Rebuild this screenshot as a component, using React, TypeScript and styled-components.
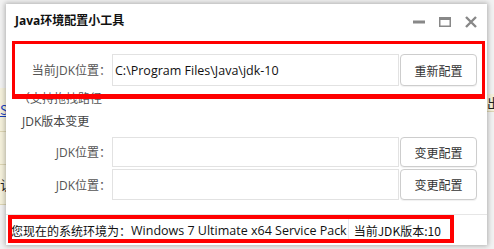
import React from "react";
import styled, { createGlobalStyle } from "styled-components";

const Global = createGlobalStyle`
  html, body { margin: 0; padding: 0; }
  body {
    width: 494px;
    height: 249px;
    overflow: hidden;
    background: #f2f2f2;
    font-family: "Open Sans", "Noto Sans CJK SC", sans-serif;
  }
`;

const Page = styled.div`
  position: relative;
  width: 494px;
  height: 249px;
  display: flex;
  justify-content: space-between;
  background: #f2f2f2;
`;

const Strip = styled.div<{ $w: number }>`
  width: ${(p) => p.$w}px;
  display: flex;
  flex-direction: column;
  overflow: hidden;
`;

const Cell = styled.div<{ $h: number; $tone?: "yellow" | "plain" }>`
  height: ${(p) => p.$h}px;
  flex: none;
  box-sizing: border-box;
  background: ${(p) => (p.$tone === "yellow" ? "#f5f1dc" : "#f2f2f2")};
  border-bottom: 1px solid ${(p) => (p.$tone === "yellow" ? "#ddd6b4" : "transparent")};
  font-family: "Noto Sans CJK SC", sans-serif;
  font-size: 13px;
  line-height: ${(p) => p.$h}px;
  white-space: nowrap;
  color: #222;
`;

const LinkText = styled.span`
  color: #1a3fc0;
  text-decoration: underline;
`;

const Window = styled.div`
  position: absolute;
  left: 6px;
  top: 4px;
  width: 481px;
  height: 241px;
  background: #ffffff;
  box-shadow: 0 0 5px 1px rgba(0, 0, 0, 0.28);
  display: flex;
  flex-direction: column;
`;

const TitleBar = styled.div`
  height: 36px;
  display: flex;
  align-items: center;
  padding: 0 10px 0 9px;
  flex: none;
`;

const Title = styled.div`
  flex: 1;
  font-weight: bold;
  font-size: 12px;
  color: #111;
  padding-bottom: 4px;
  font-family: "Open Sans", "Noto Sans CJK SC", sans-serif;
`;

const Controls = styled.div`
  display: flex;
  gap: 14px;
  align-items: center;
`;

const CtlIcon = styled.svg`
  width: 12px;
  height: 12px;
  display: block;
`;

const Body = styled.div`
  flex: 1;
  display: flex;
  flex-direction: column;
  padding: 14px 11px 0 11px;
`;

const FieldRow = styled.div<{ $h: number }>`
  display: grid;
  grid-template-columns: 94px 287px 77px;
  column-gap: 1px;
  height: ${(p) => p.$h}px;
  margin-bottom: 2px;
`;

const Label = styled.div`
  display: flex;
  align-items: center;
  justify-content: flex-end;
  font-size: 12px;
  color: #555;
  white-space: nowrap;
`;

const Input = styled.div`
  box-sizing: border-box;
  border: 1px solid #e2e2e2;
  display: flex;
  align-items: center;
  padding-left: 2px;
  font-size: 12.5px;
  color: #111;
  white-space: nowrap;
`;

const Button = styled.button`
  box-sizing: border-box;
  border: 1px solid #cdcdcd;
  border-radius: 4px;
  background: #fff;
  font-family: "Noto Sans CJK SC", sans-serif;
  font-size: 12px;
  color: #333;
  padding: 0;
  box-shadow: 0 1px 1px rgba(0, 0, 0, 0.06);
`;

const Hint = styled.div`
  height: 18px;
  line-height: 18px;
  margin-top: 2px;
  font-size: 12px;
  color: #555;
  margin-left: 1px;
`;

const Heading = styled.div`
  height: 18px;
  line-height: 18px;
  margin: 5px 0 6px 5px;
  font-size: 12px;
  color: #444;
`;

const Footer = styled.div`
  height: 30px;
  flex: none;
  border-top: 1px solid #e6e6e6;
  display: flex;
  align-items: center;
  padding-left: 5px;
  font-size: 12.5px;
  color: #111;
  white-space: nowrap;
`;

const Han = styled.span`
  font-family: "Noto Sans CJK SC", sans-serif;
  font-size: 12px;
`;

const FooterSep = styled.span`
  align-self: stretch;
  width: 1px;
  background: #e4e8f0;
  margin: 0 5px 3px 1px;
`;

const Mark = styled.div<{ $l: number; $t: number; $w: number; $h: number; $b: string }>`
  position: absolute;
  left: ${(p) => p.$l}px;
  top: ${(p) => p.$t}px;
  width: ${(p) => p.$w}px;
  height: ${(p) => p.$h}px;
  box-sizing: border-box;
  border: solid #ff0000;
  border-width: ${(p) => p.$b};
  pointer-events: none;
`;

export default function App() {
  return (
    <>
      <Global />
      <Page>
        <Strip $w={6}>
          <Cell $h={88} />
          <Cell $h={44} $tone="yellow">
            <LinkText>Sc</LinkText>
          </Cell>
          <Cell $h={33} $tone="yellow" />
          <Cell $h={40} $tone="yellow">认证</Cell>
          <Cell $h={44} />
        </Strip>
        <Strip $w={7}>
          <Cell $h={94} />
          <Cell $h={18} $tone="yellow">出</Cell>
          <Cell $h={137} />
        </Strip>

        <Window>
          <TitleBar>
            <Title>Java环境配置小工具</Title>
            <Controls>
              <CtlIcon viewBox="0 0 12 12">
                <rect x="0" y="4.5" width="12" height="3" fill="#888" />
              </CtlIcon>
              <CtlIcon viewBox="0 0 12 12">
                <rect x="0" y="1" width="12" height="10" fill="#888" />
                <rect x="1.5" y="4" width="9" height="5.5" fill="#fff" />
              </CtlIcon>
              <CtlIcon viewBox="0 0 12 12">
                <path d="M1 1 L11 11 M11 1 L1 11" stroke="#888" strokeWidth="2.4" />
              </CtlIcon>
            </Controls>
          </TitleBar>

          <Body>
            <FieldRow $h={32}>
              <Label>当前JDK位置：</Label>
              <Input>C:\Program Files\Java\jdk-10</Input>
              <Button>重新配置</Button>
            </FieldRow>
            <Hint>（支持拖拽路径</Hint>
            <Heading>JDK版本变更</Heading>
            <FieldRow $h={30}>
              <Label>JDK位置：</Label>
              <Input />
              <Button>变更配置</Button>
            </FieldRow>
            <FieldRow $h={31}>
              <Label>JDK位置：</Label>
              <Input />
              <Button>变更配置</Button>
            </FieldRow>
          </Body>

          <Footer>
            <Han>您现在的系统环境为：</Han>
            Windows 7 Ultimate x64 Service Pack
            <FooterSep />
            <Han>当前JDK版本:10</Han>
          </Footer>
        </Window>

        <Mark $l={12} $t={41} $w={473} $h={58} $b="3px 3px 5px 3px" />
        <Mark $l={8} $t={215} $w={446} $h={28} $b="4px" />
      </Page>
    </>
  );
}
